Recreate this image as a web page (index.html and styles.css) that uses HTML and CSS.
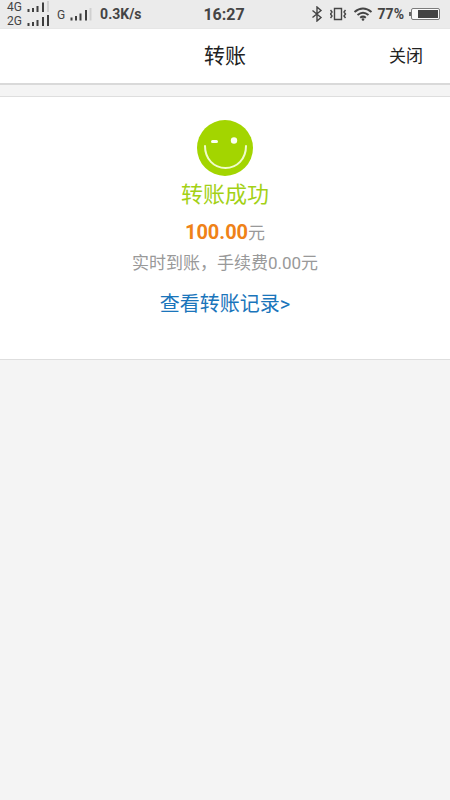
FILE: index.html
```html
<!DOCTYPE html>
<html lang="zh-CN">
<head>
<meta charset="utf-8">
<meta name="viewport" content="width=device-width, initial-scale=1">
<title>转账</title>
<link rel="stylesheet" href="styles.css">
</head>
<body>
<div class="status">
  <div class="status-side">
    <div class="sims">
      <div class="sim"><span>4G</span>
        <svg class="bars" width="23" height="12" viewBox="0 0 23 12" aria-hidden="true"><path d="M1.500 8v3M6 7v4M10.500 5v6M16 1.500v9.500"/><path class="off" d="M21 0v11"/></svg>
      </div>
      <div class="sim"><span>2G</span>
        <svg class="bars" width="23" height="12" viewBox="0 0 23 12" aria-hidden="true"><path d="M1.500 8v3M6 7v4M10.500 5v6M16 2v9M21 0v11"/></svg>
      </div>
    </div>
    <div class="sim"><span class="single">G</span>
      <svg class="bars" width="23" height="14" viewBox="0 0 23 14" aria-hidden="true"><path d="M1.500 10.500v3M6 9v4.500M10.500 6.500v7M16 3v10.500"/><path class="off" d="M20.500 1v12.500"/></svg>
    </div>
    <span class="small">0.3K/s</span>
  </div>
  <span class="time">16:27</span>
  <div class="status-side status-right">
    <svg class="line" width="14" height="16" viewBox="0 0 14 16" aria-hidden="true"><path d="M1.500 4.500l8.500 7-4 3.500V1l4 3.500-8.500 7"/></svg>
    <svg class="line" width="18" height="16" viewBox="0 0 18 16" aria-hidden="true"><path d="M4.500 2.500h7v11h-7zM.5 4L2 6 .5 8 2 10 .5 12M15.500 4L14 6l1.500 2-1.500 2 1.500 2"/></svg>
    <svg class="line wifi" width="20" height="16" viewBox="0 0 20 16" aria-hidden="true"><path d="M1.500 6Q10-1 18.500 6M4.500 9Q10 4.500 15.500 9M7.200 11.800Q10 9.500 12.800 11.800"/><circle cx="10" cy="13.500" r="1.300"/></svg>
    <span class="small">77%</span>
    <svg width="32" height="14" viewBox="0 0 32 14" aria-hidden="true"><rect x="2.500" y="1.500" width="28" height="11" rx="1.500" fill="#fafafa" stroke="#7c7c7c"/><path d="M0 5h2v4H0z" fill="#666"/><path d="M9 3h20v8H9z" fill="#444"/></svg>
  </div>
</div>
<header class="header">
  <h1>转账</h1>
  <button class="close" type="button">关闭</button>
</header>
<main class="card">
  <svg class="face" width="58" height="57" viewBox="0 0 58 57" aria-hidden="true">
    <circle cx="29" cy="28" r="28" fill="#a3d500"/>
    <path d="M9 26C9 39 18 48 29.500 48S50 39 50 26" fill="none" stroke="#f0fccb" stroke-width="2" stroke-linecap="round"/>
    <rect x="15" y="20" width="7" height="3" rx="1.500" fill="#fafff0"/>
    <circle cx="38" cy="20.500" r="3.200" fill="#fafff0"/>
  </svg>
  <h2>转账成功</h2>
  <p class="amount"><strong>100.00</strong>元</p>
  <p class="note">实时到账，手续费0.00元</p>
  <a class="records" href="#">查看转账记录&gt;</a>
</main>
</body>
</html>
```
FILE: styles.css
```css
* {
  box-sizing: border-box;
}

body {
  margin: 0;
  min-height: 100vh;
  background: #f4f4f4;
  font-family: Roboto, "Noto Sans CJK SC", sans-serif;
  color: #222;
}

h1, h2, p {
  margin: 0;
  font-weight: 400;
}

.status {
  display: grid;
  grid-template-columns: 1fr auto 1fr;
  align-items: center;
  height: 29px;
  padding: 0 9px 0 7px;
  background: #ebebeb;
  border-bottom: 1px solid #e6e6e6;
  color: #444;
}

.status-side {
  display: flex;
  align-items: center;
  gap: 7px;
}

.status-right {
  justify-content: flex-end;
  gap: 5px;
}

.sims {
  display: grid;
}

.sim {
  display: flex;
  align-items: center;
  gap: 5px;
  font-size: 12px;
  line-height: 14px;
}

.single {
  padding-top: 2px;
}

.small {
  font-size: 14px;
  font-weight: 700;
}

.time {
  padding-top: 1px;
  font-size: 16px;
  font-weight: 700;
}

.bars {
  fill: none;
  stroke: #3f3f3f;
  stroke-width: 2;
}

.bars .off {
  stroke: #d0d0d0;
}

.line {
  fill: none;
  stroke: #444;
  stroke-width: 1.4;
}

.wifi {
  stroke-width: 2;
}

.wifi circle {
  fill: #444;
  stroke: none;
}

.header {
  display: grid;
  grid-template-columns: 1fr auto 1fr;
  align-items: center;
  height: 56px;
  padding: 0 27px 4px;
  background: #fff;
  border-bottom: 2px solid #d9d9d9;
}

.header h1 {
  grid-column: 2;
  font-size: 21px;
}

.close {
  justify-self: end;
  padding: 0;
  border: 0;
  background: none;
  color: #222;
  font: inherit;
  font-size: 17px;
}

.card {
  display: flex;
  flex-direction: column;
  align-items: center;
  margin-top: 11px;
  padding: 23px 16px 39px;
  background: #fff;
  border: solid #dedede;
  border-width: 1px 0;
  text-align: center;
}

.face {
  display: block;
}

.card h2 {
  font-size: 22px;
  line-height: 35px;
  color: #a3d116;
}

.amount {
  margin-top: 4px;
  font-size: 17px;
  line-height: 32px;
  color: #999;
}

.amount strong {
  font-size: 20px;
  color: #ef8218;
}

.note {
  font-size: 17px;
  line-height: 28px;
  color: #999;
}

.records {
  margin-top: 11px;
  font-size: 20px;
  line-height: 32px;
  color: #1a75bb;
  text-decoration: none;
}
```
